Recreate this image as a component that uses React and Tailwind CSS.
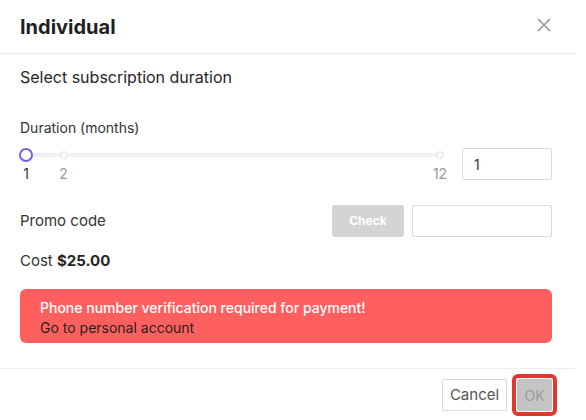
import React, { useState } from 'react';

const marks = [
  { value: 1, pos: 0 },
  { value: 2, pos: 1 / 11 },
  { value: 12, pos: 1 },
];

const App = () => {
  const [months, setMonths] = useState('1');
  const [promo, setPromo] = useState('');

  return (
    <div className="w-[576px] bg-white text-[#222] font-['Inter','Noto_Sans',sans-serif]">
      {/* header */}
      <div className="h-[54px] flex items-center justify-between pl-5 pr-[24px] border-b border-[#eeeeee]">
        <h2 className="text-[20px] font-bold leading-7 text-[#1f1f1f]">Individual</h2>
        <button className="w-4 h-4 flex items-center justify-center text-[#8c8c8c] -mt-[3px]">
          <svg width="14" height="14" viewBox="0 0 14 14" fill="none" stroke="currentColor" strokeWidth="1.4">
            <path d="M1 1L13 13M13 1L1 13" />
          </svg>
        </button>
      </div>

      {/* body */}
      <div className="pl-5 pr-[24px] pt-[13px] pb-[25px]">
        <p className="text-[16px] leading-5 text-[#262626]">Select subscription duration</p>

        <p className="mt-[31px] text-[14px] leading-5 text-[#333]">Duration (months)</p>

        <div className="mt-[10px] flex items-start">
          <div className="flex-1 px-[6px] mr-[16px]">
            <div className="relative h-[32px]">
              <div className="absolute left-0 right-0 top-[5px] h-[4px] rounded-full bg-[#f0f0f0]" />
              {marks.map((m) => (
                <React.Fragment key={m.value}>
                  <span
                    className="absolute top-[3px] w-[8px] h-[8px] -ml-[4px] rounded-full border-2 border-[#ececec] bg-white"
                    style={{ left: `${m.pos * 100}%` }}
                  />
                  <span
                    className={`absolute top-[16px] text-[14px] leading-5 -translate-x-1/2 ${m.value === 1 ? 'text-[#333]' : 'text-[#999]'}`}
                    style={{ left: `${m.pos * 100}%` }}
                  >
                    {m.value}
                  </span>
                </React.Fragment>
              ))}
              <span className="absolute left-0 top-0 w-[14px] h-[14px] -ml-[7px] rounded-full border-2 border-[#6b63f6] bg-white" />
            </div>
          </div>
          <input
            value={months}
            onChange={(e) => setMonths(e.target.value)}
            className="w-[90px] h-[32px] border border-[#d9d9d9] rounded-[2px] px-[11px] text-[14px] text-[#333] outline-none"
          />
        </div>

        <div className="mt-[25px] flex items-center">
          <span className="flex-1 text-[15px] text-[#333]">Promo code</span>
          <button className="w-[72px] h-[32px] rounded-[3px] bg-[#d4d4d4] text-white text-[12px] font-bold">Check</button>
          <input
            value={promo}
            onChange={(e) => setPromo(e.target.value)}
            className="ml-[8px] w-[140px] h-[32px] border border-[#d9d9d9] rounded-[2px] px-[11px] text-[14px] outline-none"
          />
        </div>

        <p className="mt-[14px] text-[15px] leading-5 text-[#333]">
          Cost <span className="font-bold text-[#262626]">$25.00</span>
        </p>

        <div className="mt-[18px] rounded-[6px] bg-[#ff5f5f] pl-5 pr-4 pt-[9px] pb-[5px] text-[14px] leading-5">
          <p className="font-medium text-white">Phone number verification required for payment!</p>
          <p className="text-[#1f1f1f] cursor-pointer">Go to personal account</p>
        </div>
      </div>

      {/* footer */}
      <div className="border-t border-[#eeeeee] pt-[10px] pb-[9px] pr-[24px] flex justify-end items-center gap-[10px]">
        <button className="h-[32px] w-[65px] border border-[#d9d9d9] rounded-[2px] text-[15px] text-[#555] bg-white">Cancel</button>
        <div className="relative">
          <button className="h-[32px] w-[35px] rounded-[2px] bg-[#c4c4c4] text-[14px] text-[#9a9a9a]">OK</button>
          <span className="absolute -inset-[5px] border-[4px] border-[#e0382f] rounded-[6px] pointer-events-none" />
        </div>
      </div>
    </div>
  );
};

export default App;
